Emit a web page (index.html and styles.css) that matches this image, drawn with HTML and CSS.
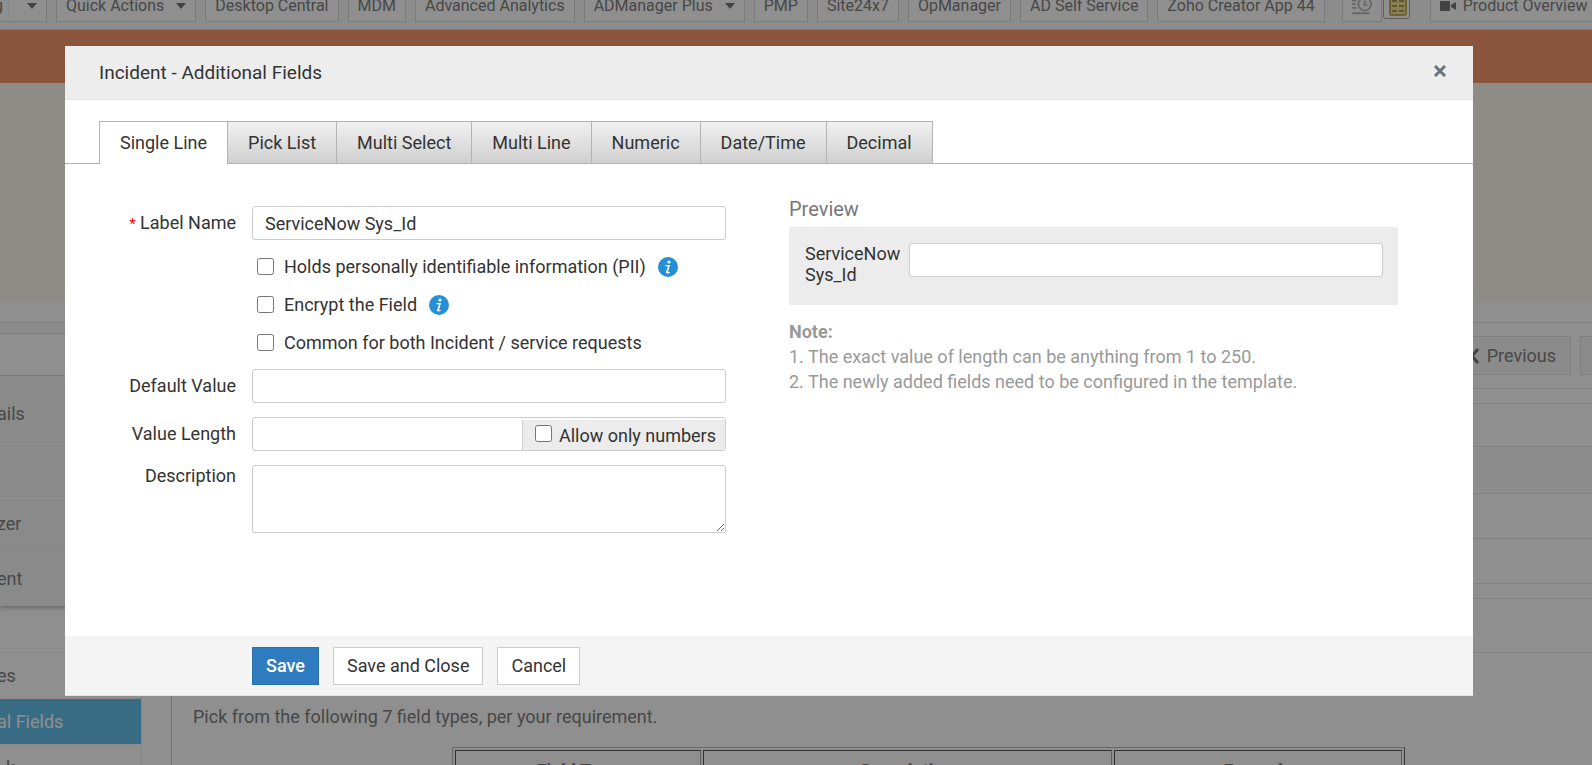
FILE: index.html
```html
<!DOCTYPE html>
<html lang="en">
<head>
  <meta charset="utf-8">
  <title>Incident - Additional Fields</title>
  <link rel="stylesheet" href="styles.css">
</head>
<body>
  <div class="page">
    <div class="toolbar">
      <button class="tool first">g <span class="split"></span><span class="caret"></span></button>
      <button class="tool">Quick Actions <span class="caret"></span></button>
      <button class="tool">Desktop Central</button>
      <button class="tool">MDM</button>
      <button class="tool">Advanced Analytics</button>
      <button class="tool">ADManager Plus <span class="caret"></span></button>
      <button class="tool">PMP</button>
      <button class="tool">Site24x7</button>
      <button class="tool">OpManager</button>
      <button class="tool">AD Self Service</button>
      <button class="tool">Zoho Creator App 44</button>
      <div class="tool-icons">
        <button class="tool icon-tool" aria-label="Recent items">
          <svg width="22" height="24" viewBox="0 0 22 24" fill="none" stroke="#bbb" stroke-width="2">
            <circle cx="14" cy="10" r="7"/>
            <path d="M14 6v5h3M0 6h5M0 10h4M0 14h5M0 20h19"/>
          </svg>
        </button>
        <button class="note-tool" aria-label="Notes">
          <svg width="18" height="22" viewBox="0 0 18 22">
            <rect x="1" y="1" width="16" height="20" rx="1" fill="#f7e794" stroke="#b09c3c" stroke-width="1.500"/>
            <path d="M3 7h5M10 7h5M3 12h5M10 12h5M3 17h5M10 17h5" stroke="#8f8350" stroke-width="1.500"/>
          </svg>
        </button>
      </div>
      <button class="tool">
        <svg class="video" width="16" height="10" viewBox="0 0 16 10" fill="#777"><path d="M1 0h8q1 0 1 1v8q0 1-1 1H1q-1 0-1-1V1q0-1 1-1zM11 4l5-3v8l-5-3z"/></svg>
        Product Overview
      </button>
    </div>
    <div class="orange-band"></div>
    <div class="banner"></div>

    <div class="columns">
      <div class="sidebar">
        <div class="side-gap"></div>
        <div class="side-search"></div>
        <div class="side-gap"></div>
        <a class="side-item" href="#">ails</a>
        <a class="side-item" href="#"></a>
        <a class="side-item" href="#">zer</a>
        <a class="side-item last" href="#">ent</a>
        <div class="side-sub">
          <a class="sub-item" href="#"></a>
          <a class="sub-item" href="#">es</a>
          <a class="sub-item active" href="#">al Fields</a>
          <a class="sub-item" href="#">&nbsp; k</a>
        </div>
      </div>
      <div class="main">
        <div class="pager">
          <button class="page-btn">
            <svg width="10" height="16" viewBox="0 0 10 16" fill="none" stroke="#777" stroke-width="3"><path d="M8 1L2 8l6 7"/></svg>
            Previous
          </button>
          <button class="page-btn next" aria-label="Next"></button>
        </div>
        <div class="band top"></div>
        <div class="band shaded"></div>
        <div class="band"></div>
        <div class="band"></div>
        <div class="band thin"></div>
        <div class="band tall"></div>
        <p class="pick">Pick from the following 7 field types, per your requirement.</p>
        <table class="types" border="1">
          <tr><th class="c1">Field Type</th><th class="c2">Description</th><th class="c3">Example</th></tr>
        </table>
      </div>
    </div>
  </div>

  <div class="overlay">
    <div class="modal" role="dialog" aria-labelledby="modal-title">
      <div class="modal-header">
        <h1 id="modal-title">Incident - Additional Fields</h1>
        <button class="close" aria-label="Close">
          <svg width="14" height="14" viewBox="0 0 14 14" stroke="#68737b" stroke-width="3"><path d="M2 2l10 10M12 2L2 12"/></svg>
        </button>
      </div>

      <div class="tabs" role="tablist">
        <button class="tab active" role="tab">Single Line</button>
        <button class="tab" role="tab">Pick List</button>
        <button class="tab" role="tab">Multi Select</button>
        <button class="tab" role="tab">Multi Line</button>
        <button class="tab" role="tab">Numeric</button>
        <button class="tab" role="tab">Date/Time</button>
        <button class="tab" role="tab">Decimal</button>
      </div>

      <div class="modal-body">
        <form class="form">
          <div class="row">
            <label for="label-name"><span class="required">*</span> Label Name</label>
            <input type="text" class="text" id="label-name" value="ServiceNow Sys_Id">
          </div>
          <div class="checks">
            <div class="check">
              <input type="checkbox" id="pii">
              <label for="pii">Holds personally identifiable information (PII)</label>
              <svg class="info" width="20" height="20" viewBox="0 0 20 20"><circle cx="10" cy="10" r="10" fill="#268fd5"/><g fill="#fff"><circle cx="11" cy="5" r="1.600"/><path d="M7.500 8h4.500l-2 7h2l-.5 1q-3.500 1.200-3.500-.8l2-6H7.200z"/></g></svg>
            </div>
            <div class="check">
              <input type="checkbox" id="encrypt">
              <label for="encrypt">Encrypt the Field</label>
              <svg class="info" width="20" height="20" viewBox="0 0 20 20"><circle cx="10" cy="10" r="10" fill="#268fd5"/><g fill="#fff"><circle cx="11" cy="5" r="1.600"/><path d="M7.500 8h4.500l-2 7h2l-.5 1q-3.500 1.200-3.500-.8l2-6H7.200z"/></g></svg>
            </div>
            <div class="check">
              <input type="checkbox" id="common">
              <label for="common">Common for both Incident / service requests</label>
            </div>
          </div>
          <div class="row">
            <label for="default-value">Default Value</label>
            <input type="text" class="text" id="default-value">
          </div>
          <div class="row">
            <label for="value-length">Value Length</label>
            <div class="group">
              <input type="text" id="value-length">
              <div class="addon">
                <input type="checkbox" id="numbers">
                <label for="numbers">Allow only numbers</label>
              </div>
            </div>
          </div>
          <div class="row area">
            <label for="description">Description</label>
            <textarea id="description"></textarea>
          </div>
        </form>

        <div class="side">
          <h2>Preview</h2>
          <div class="preview">
            <label for="preview-field">ServiceNow Sys_Id</label>
            <input type="text" class="text" id="preview-field">
          </div>
          <div class="note">
            <b>Note:</b><br>
            1. The exact value of length can be anything from 1 to 250.<br>
            2. The newly added fields need to be configured in the template.
          </div>
        </div>
      </div>

      <div class="modal-footer">
        <button class="btn primary">Save</button>
        <button class="btn">Save and Close</button>
        <button class="btn">Cancel</button>
      </div>
    </div>
  </div>
</body>
</html>
```
FILE: styles.css
```css
:root {
  --text: #333;
  --muted: #999;
  --border: #ccc;
  --line: #e6e6e6;
  --tab-border: #b3b3b3;
  --blue: #2f7bbf;
}

* {
  box-sizing: border-box;
}

body {
  margin: 0;
  height: 100vh;
  overflow: hidden;
  font-family: Roboto, "Liberation Sans", sans-serif;
  font-size: 18px;
  line-height: 22px;
  color: var(--text);
  background: #fff;
}

button, input, textarea {
  font: inherit;
  color: inherit;
}

button {
  cursor: pointer;
}

/* page behind the dialog */
.page {
  height: 100vh;
  overflow: hidden;
  color: #808080;
}

.toolbar {
  display: flex;
  align-items: flex-end;
  gap: 9px;
  height: 30px;
  padding-bottom: 7px;
  background: #f9f9f9;
  border-bottom: 1px solid #ddd;
}

.tool {
  display: flex;
  flex: none;
  align-items: center;
  height: 30px;
  padding: 0 9px 2px;
  border: 1px solid #dcdcdc;
  background: #fff;
  font-size: 16px;
  white-space: nowrap;
}

.tool.first {
  width: 47px;
  padding: 0 9px 2px 0;
  border-left: none;
  justify-content: space-between;
  text-indent: -6px;
}

.split {
  height: 24px;
  border-left: 1px solid #eee;
}

.caret {
  margin-left: 12px;
  border: 5px solid transparent;
  border-top: 6px solid #777;
  border-bottom: none;
}

.tool-icons {
  display: flex;
  gap: 1px;
  margin: 0 11px 0 8px;
}

.icon-tool {
  width: 40px;
}

.note-tool {
  width: 27px;
  height: 27px;
  padding: 0 0 2px 4px;
  border: 1px solid #aaa;
  border-radius: 3px;
  background: #fff;
  line-height: 0;
}

.video {
  margin-right: 7px;
}

.orange-band {
  height: 53px;
  background: #f8966d;
}

.banner {
  height: 219px;
  background: #fffaf0;
}

.columns {
  display: flex;
  margin-top: 20px;
  border-top: 1px solid var(--line);
}

.sidebar {
  flex: none;
  width: 172px;
  border-right: 1px solid #ccc;
}

.side-gap {
  height: 10px;
  background: #f8f8f8;
}

.side-search {
  height: 43px;
  border-top: 1px solid #ddd;
  border-bottom: 1px solid #ddd;
}

.side-item {
  display: flex;
  align-items: center;
  height: 55px;
  background: #f7f7f7;
  border-top: 1px solid #f1f1f1;
  color: inherit;
  text-decoration: none;
  text-indent: -3px;
}

.side-item.last {
  box-shadow: 0 2px 4px #bbb;
}

.side-sub {
  width: 142px;
  margin-top: 1px;
  border-right: 1px solid #eee;
}

.sub-item {
  display: flex;
  align-items: center;
  height: 46px;
  border-bottom: 1px solid #f4f4f4;
  color: inherit;
  text-decoration: none;
  text-indent: -3px;
}

.sub-item.active {
  background: #64c1ec;
  color: #fff;
}

.main {
  flex: 1;
  min-width: 0;
}

.pager {
  display: flex;
  justify-content: flex-end;
  gap: 9px;
  height: 65px;
  padding-top: 13px;
}

.page-btn {
  display: flex;
  align-items: center;
  gap: 7px;
  height: 39px;
  padding: 0 14px;
  background: #f8f8f8;
  border: 1px solid #e2e2e2;
}

.page-btn.next {
  width: 12px;
  padding: 0;
  border-right: none;
}

.band {
  height: 45px;
  border-bottom: 1px solid var(--line);
}

.band.top {
  height: 59px;
  border-top: 1px solid var(--line);
  background: linear-gradient(#fff 14px, #e6e6e6 14px, #e6e6e6 15px, #fff 15px);
}

.band.shaded {
  height: 47px;
  background: #fbfbfb;
}

.band.thin {
  height: 15px;
}

.band.tall {
  height: 54px;
}

.pick {
  margin: 53px 0 19px 21px;
}

.types {
  width: 953px;
  margin-left: 280px;
  border-collapse: separate;
  border-spacing: 2px;
  border-color: #bbb;
}

.types th {
  padding: 9px;
  border-color: #aaa;
}

.c1 {
  width: 246px;
}

.c2 {
  width: 409px;
}

/* dialog */
.overlay {
  position: fixed;
  inset: 0;
  background: rgba(0, 0, 0, 0.44);
}

.modal {
  margin: 46px 119px 0 65px;
  background: #fff;
}

.modal-header {
  display: flex;
  align-items: center;
  justify-content: space-between;
  height: 54px;
  padding: 0 26px 0 34px;
  background: #ededed;
  border-bottom: 1px solid #e2e2e2;
}

.modal-header h1 {
  margin: 0;
  font-size: 19px;
  font-weight: normal;
}

.close {
  padding: 0 0 4px;
  border: none;
  background: none;
  line-height: 0;
}

.tabs {
  display: flex;
  margin-top: 21px;
  padding-left: 34px;
  border-bottom: 1px solid var(--tab-border);
}

.tab {
  height: 42px;
  padding: 0 20px;
  border: 1px solid var(--tab-border);
  border-left: none;
  border-bottom: none;
  background: linear-gradient(#f0f0f0, #d0d0d0);
}

.tab.active {
  height: 43px;
  margin-bottom: -1px;
  border-left: 1px solid var(--tab-border);
  background: #fff;
}

.modal-body {
  display: grid;
  grid-template-columns: 661px 1fr;
  gap: 63px;
  min-height: 472px;
  padding-right: 75px;
}

.form {
  padding-top: 42px;
}

.row {
  display: grid;
  grid-template-columns: 171px 1fr;
  gap: 16px;
  align-items: center;
  margin-bottom: 14px;
}

.row > label {
  text-align: right;
}

.required {
  color: #f00;
  font-size: 14px;
}

.text, .group, textarea {
  width: 100%;
  height: 34px;
  border: 1px solid var(--border);
  border-radius: 3px;
  background: #fff;
}

.text {
  padding: 0 12px;
}

.row.area {
  align-items: start;
}

textarea {
  display: block;
  height: 68px;
  padding: 6px 12px;
}

.checks {
  margin: -6px 0 7px 192px;
}

.check {
  display: flex;
  align-items: center;
  height: 38px;
}

input[type="checkbox"] {
  width: 17px;
  height: 17px;
  margin: 0 10px 2px 0;
}

.info {
  margin-left: 12px;
}

.group {
  display: flex;
}

.group input[type="text"] {
  flex: 1;
  min-width: 0;
  padding: 0 12px;
  border: none;
  background: none;
}

.addon {
  display: flex;
  align-items: center;
  width: 203px;
  margin-top: 2px;
  padding: 2px 0 0 12px;
  background: #ececec;
  border-left: 1px solid var(--border);
}

.addon input[type="checkbox"] {
  margin: 0 7px 5px 0;
}

.side {
  padding-top: 33px;
}

.side h2 {
  margin: 0 0 6px;
  font-size: 20px;
  line-height: 24px;
  font-weight: normal;
  color: #777;
}

.preview {
  display: grid;
  grid-template-columns: 104px 1fr;
  align-items: start;
  padding: 16px 15px 20px 16px;
  background: #ececec;
}

.preview label {
  line-height: 21px;
  padding-right: 8px;
}

.note {
  margin-top: 14px;
  line-height: 25px;
  color: var(--muted);
}

.modal-footer {
  display: flex;
  gap: 14px;
  padding: 11px 0 10px 187px;
  background: #f4f4f4;
  border-bottom: 1px solid #e2e2e2;
}

.btn {
  height: 38px;
  padding: 0 13px;
  border: 1px solid var(--border);
  background: #fff;
}

.btn.primary {
  background: var(--blue);
  border-color: #2a70b0;
  color: #fff;
  font-weight: 500;
}
```
